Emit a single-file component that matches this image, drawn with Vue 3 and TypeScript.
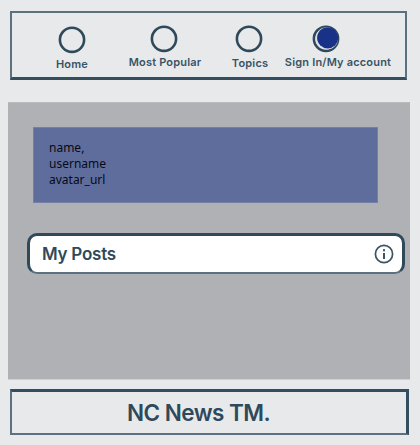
<script setup lang="ts">
interface NavItem {
  id: string
  label: string
  active?: boolean
}

const navItems: NavItem[] = [
  { id: 'home', label: 'Home' },
  { id: 'popular', label: 'Most Popular' },
  { id: 'topics', label: 'Topics' },
  { id: 'account', label: 'Sign In/My account', active: true },
]

const profile: string[] = ['name,', 'username', 'avatar_url']
</script>

<template>
  <div class="page">
    <nav class="nav">
      <a v-for="item in navItems" :key="item.id" class="nav-item" :class="item.id">
        <svg class="ring" width="28" height="28" viewBox="0 0 28 28">
          <circle cx="14" cy="13.8" r="12.1" fill="none" stroke="#2f495a" stroke-width="2.6" />
          <template v-if="item.active">
            <circle cx="14.8" cy="13.4" r="11.2" fill="#dfe2e8" />
            <circle cx="15.7" cy="12.8" r="10.6" fill="#1a3188" />
          </template>
        </svg>
        <span class="label">{{ item.label }}</span>
      </a>
    </nav>

    <main class="content">
      <section class="profile">
        <div v-for="line in profile" :key="line">{{ line }}</div>
      </section>
      <section class="posts">
        <h2 class="posts-title">My Posts</h2>
        <svg class="info" width="20" height="20" viewBox="0 0 20 20">
          <circle cx="10" cy="10" r="8.6" fill="none" stroke="#3c5464" stroke-width="1.7" />
          <rect x="9" y="5.2" width="2" height="2.1" fill="#3c5464" />
          <rect x="9" y="9" width="2" height="6" fill="#3c5464" />
        </svg>
      </section>
    </main>

    <footer class="footer"><span class="brand">NC News TM.</span></footer>
  </div>
</template>

<style>
body {
  background: #e7e9eb;
}
</style>

<style scoped>
.page {
  box-sizing: border-box;
  width: 420px;
  height: 445px;
  padding: 11px 0 0 8px;
  background: #e7e9eb;
  color: #2f495a;
  font-family: Inter, "Liberation Sans", sans-serif;
  overflow: hidden;
}

.nav {
  box-sizing: border-box;
  display: flex;
  align-items: flex-start;
  width: 397px;
  height: 69px;
  margin-left: 2px;
  padding-top: 12px;
  border: 2px solid #5b7180;
  border-bottom: 3px solid #344e5f;
}

.nav-item {
  display: flex;
  flex-direction: column;
  align-items: center;
  flex: none;
}

.ring {
  display: block;
}

.label {
  font-size: 11px;
  font-weight: 600;
  line-height: 14px;
  letter-spacing: 0.18px;
  margin-top: 2px;
  color: #3a5364;
  white-space: nowrap;
}

.home {
  width: 34px;
  margin-left: 43px;
  padding-top: 1px;
}

.home .label {
  margin-top: 3px;
}

.popular {
  width: 74px;
  margin-left: 39px;
}

.popular .ring {
  margin-left: -3px;
}

.topics {
  width: 38px;
  margin-left: 29px;
}

.topics .ring {
  margin-left: -2px;
}

.topics .label {
  margin-top: 3px;
}

.account {
  width: 108px;
  margin-left: 15px;
}

.account .ring {
  margin-left: -25px;
}

.content {
  box-sizing: border-box;
  width: 402px;
  height: 278px;
  margin-top: 22px;
  padding: 24px 0 0 19px;
  background: #b0b1b4;
  border-bottom: 1px solid #d0d1d4;
  border-top: 1px solid #babbbe;
}

.profile {
  box-sizing: border-box;
  width: 345px;
  height: 76px;
  margin-left: 6px;
  padding: 12px 15px;
  border: 1px solid #7480a9;
  background: #5f6d9d;
  color: #080a12;
  font-family: "Noto Sans", sans-serif;
  font-size: 12px;
  line-height: 16px;
}

.posts {
  box-sizing: border-box;
  display: flex;
  align-items: center;
  justify-content: space-between;
  width: 378px;
  height: 41px;
  margin-top: 30px;
  padding: 0 8px 0 12px;
  border: 3px solid #2f495a;
  border-bottom: 2px solid #5b7180;
  border-radius: 10px;
  background: #fff;
}

.posts-title {
  margin: 0;
  font-size: 17px;
  font-weight: 600;
  line-height: 22px;
  letter-spacing: -0.25px;
}

.footer {
  box-sizing: border-box;
  display: flex;
  align-items: center;
  width: 399px;
  height: 46px;
  margin: 9px 0 0 2px;
  padding-left: 115px;
  border: 2px solid #5b7180;
  border-top: 3px solid #344e5f;
  border-right: 3px solid #344e5f;
}

.brand {
  font-size: 22.5px;
  font-weight: 600;
  line-height: 28px;
  letter-spacing: -0.55px;
  white-space: nowrap;
}
</style>
